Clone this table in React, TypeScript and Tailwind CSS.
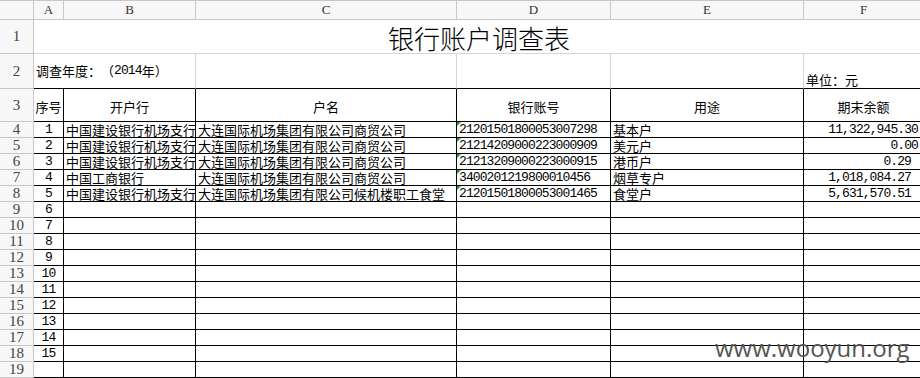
import React from "react";

const CJK = "font-['Noto_Sans_CJK_SC',sans-serif] [text-spacing-trim:space-all]";
const MONO = "font-['Liberation_Mono',monospace] text-[13px] tracking-[-0.9px]";
const SERIF = "font-['Liberation_Serif',serif]";

type Row = { n: string; bank: string; name: string; acct: string; use: string; amt: string; pad: boolean };

const data: Row[] = [
  { n: "1", bank: "中国建设银行机场支行", name: "大连国际机场集团有限公司商贸公司", acct: "21201501800053007298", use: "基本户", amt: "11,322,945.30", pad: false },
  { n: "2", bank: "中国建设银行机场支行", name: "大连国际机场集团有限公司商贸公司", acct: "21214209000223000909", use: "美元户", amt: "0.00", pad: false },
  { n: "3", bank: "中国建设银行机场支行", name: "大连国际机场集团有限公司商贸公司", acct: "21213209000223000915", use: "港币户", amt: "0.29", pad: true },
  { n: "4", bank: "中国工商银行", name: "大连国际机场集团有限公司商贸公司", acct: "3400201219800010456", use: "烟草专户", amt: "1,018,084.27", pad: true },
  { n: "5", bank: "中国建设银行机场支行", name: "大连国际机场集团有限公司候机楼职工食堂", acct: "21201501800053001465", use: "食堂户", amt: "5,631,570.51", pad: true },
];

const rowHead = `flex items-center justify-center bg-[#f7f7f7] border-r border-b border-[#c8c8c8] text-[15px] text-[#444] ${SERIF}`;
const colHead = `flex items-center justify-center bg-[#f7f7f7] border-t border-r border-b border-[#c8c8c8] text-[13px] text-[#333] ${SERIF}`;
const cell = "border-r border-b border-black flex items-center overflow-hidden whitespace-nowrap text-black";

function Tri() {
  return <div className="absolute top-0 left-0 w-0 h-0 border-t-[4px] border-r-[4px] border-t-[#1e9e2e] border-r-transparent" />;
}

export default function App() {
  const empty = Array.from({ length: 10 }, (_, i) => String(i + 6));
  return (
    <div className="relative w-[920px] h-[378px] overflow-hidden bg-white">
      <div className="grid grid-cols-[34px_30px_132px_261px_154px_193px_120px] grid-rows-[20px_34px_35px_33px_repeat(16,16px)] w-[924px]">
        {/* column header */}
        <div className={colHead}></div>
        {["A", "B", "C", "D", "E", "F"].map((c) => (
          <div key={c} className={colHead}>{c}</div>
        ))}

        {/* row 1 */}
        <div className={rowHead}>1</div>
        <div className={`col-span-6 flex items-center justify-center pt-[2px] border-b border-[#d6d6d6] text-[26px] font-light text-black ${CJK}`}>
          银行账户调查表
        </div>

        {/* row 2 */}
        <div className={rowHead}>2</div>
        <div className={`col-span-2 flex items-center pl-[2px] border-r border-b border-r-[#d6d6d6] border-b-black text-[13px] whitespace-nowrap overflow-visible text-black ${CJK}`}>
          <span>调查年度：（</span>
          <span className="font-['Liberation_Mono',monospace] text-[13px] tracking-[-0.9px]">2014</span>
          <span>年）</span>
        </div>
        <div className="border-r border-b border-r-[#d6d6d6] border-b-black"></div>
        <div className="border-r border-b border-r-[#d6d6d6] border-b-black"></div>
        <div className="border-r border-b border-r-[#d6d6d6] border-b-black"></div>
        <div className={`flex items-end pl-[2px] pb-[1px] border-r border-b border-r-[#d6d6d6] border-b-black text-[13px] leading-[15px] text-black ${CJK}`}>
          单位：元
        </div>

        {/* row 3 */}
        <div className={rowHead}>3</div>
        {["序号", "开户行", "户名", "银行账号", "用途", "期末余额"].map((h) => (
          <div key={h} className={`${cell} justify-center pt-[3px] text-[13px] ${CJK}`}>{h}</div>
        ))}

        {/* data rows */}
        {data.map((r, i) => (
          <React.Fragment key={r.n}>
            <div className={rowHead}>{i + 4}</div>
            <div className={`${cell} justify-center ${MONO}`}>{r.n}</div>
            <div className={`${cell} pl-[2px] text-[13px] leading-[16px] ${CJK}`}>{r.bank}</div>
            <div className={`${cell} pl-[2px] text-[13px] leading-[16px] ${CJK}`}>{r.name}</div>
            <div className={`${cell} relative pl-[2px] ${MONO}`}>
              <Tri />
              {r.acct}
            </div>
            <div className={`${cell} pl-[2px] text-[13px] leading-[16px] ${CJK}`}>{r.use}</div>
            <div className={`${cell} justify-end ${MONO} ${r.pad ? "pr-[12px]" : "pr-[5px]"}`}>{r.amt}</div>
          </React.Fragment>
        ))}

        {empty.map((n, i) => (
          <React.Fragment key={n}>
            <div className={rowHead}>{i + 9}</div>
            <div className={`${cell} justify-center ${MONO}`}>{n}</div>
            <div className={cell}></div>
            <div className={cell}></div>
            <div className={cell}></div>
            <div className={cell}></div>
            <div className={cell}></div>
          </React.Fragment>
        ))}

        {/* row 19 */}
        <div className={rowHead}>19</div>
        <div className={cell}></div>
        <div className={cell}></div>
        <div className={cell}></div>
        <div className={cell}></div>
        <div className={cell}></div>
        <div className={cell}></div>
      </div>

      <div className="absolute left-[715px] top-[333px] text-[24px] leading-[30px] text-[#555555] font-['Open_Sans',sans-serif] pointer-events-none">
        www.wooyun.org
      </div>
    </div>
  );
}
